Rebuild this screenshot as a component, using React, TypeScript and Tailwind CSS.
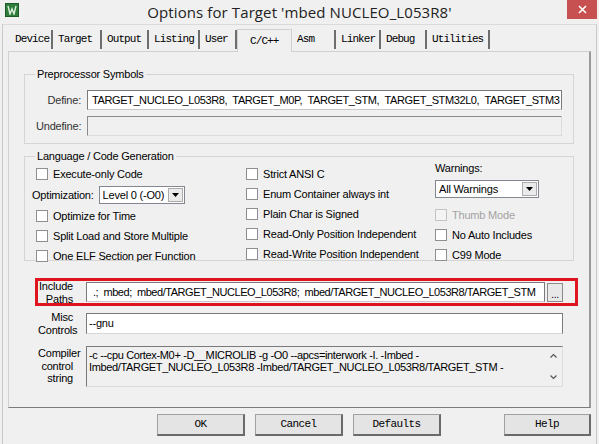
import React from 'react'

const tabs: [string, string][] = [
  ['Device', 'w-[43px]'],
  ['Target', 'w-[49px]'],
  ['Output', 'w-[47px]'],
  ['Listing', 'w-[51px]'],
  ['User', 'w-[37px]'],
  ['C/C++', 'w-[55px]'],
  ['Asm', 'w-[44px]'],
  ['Linker', 'w-[45px]'],
  ['Debug', 'w-[46px]'],
  ['Utilities', 'w-[63px]'],
]

const Check = ({ label, disabled }: { label: string; disabled?: boolean }) => (
  <div className="flex items-center h-[20px] gap-[5px]">
    <span
      className={
        'w-[12px] h-[12px] border ' +
        (disabled ? 'border-[#c4c4c4] bg-[#f4f4f4]' : 'border-[#8e8f8f] bg-white')
      }
    />
    <span className={disabled ? 'text-[#a3a3a3]' : 'text-black'}>{label}</span>
  </div>
)

const Select = ({ value, w }: { value: string; w: string }) => (
  <div className={'flex items-center h-[18px] border border-[#828790] bg-white pl-[3px] pr-[1px] ' + w}>
    <span className="flex-1 whitespace-nowrap overflow-hidden">{value}</span>
    <span className="w-[15px] h-[14px] border border-[#acacac] bg-[#eaeaea] flex items-center justify-center">
      <svg width="7" height="4" viewBox="0 0 7 4">
        <path d="M0 0h7L3.5 4z" fill="#000" />
      </svg>
    </span>
  </div>
)

const Group = ({ title, className, children }: { title: string; className: string; children: React.ReactNode }) => (
  <div className={'relative border border-[#d5d5d5] ' + className}>
    <span className="absolute -top-[8px] left-[10px] px-[2px] bg-[#f0f0f0] leading-[14px]">{title}</span>
    {children}
  </div>
)

const FieldLabel = ({ lines }: { lines: string[] }) => (
  <div className="w-[36px] text-right leading-[13px] pr-[1px] pt-[2px] whitespace-nowrap">
    {lines.map((l) => (
      <div key={l}>{l}</div>
    ))}
  </div>
)

const mono = { fontFamily: '"Liberation Mono", "DejaVu Sans Mono", monospace' }

export default function App() {
  return (
    <div
      className="w-[599px] h-[444px] bg-[#f0f0f0] overflow-hidden text-[11px] tracking-[-0.2px] text-black"
      style={{ fontFamily: '"Liberation Sans", Arial, sans-serif' }}
    >
      {/* title bar */}
      <div className="relative h-[24px] flex items-center justify-center">
        <div className="absolute left-[5px] top-[3px] w-[14px] h-[14px] bg-[#2e7d3a] border border-[#1c5a27] flex items-center justify-center">
          <svg width="10" height="10" viewBox="0 0 10 10">
            <path d="M1 1l2 8 2-5 2 5 2-8" stroke="#dff2df" strokeWidth="1.4" fill="none" />
          </svg>
        </div>
        <span className="text-[15px] text-[#222] tracking-[0.1px]" style={{ fontFamily: '"Open Sans", "Noto Sans", sans-serif' }}>
          Options for Target 'mbed NUCLEO_L053R8'
        </span>
        <div className="absolute right-[2px] top-0 w-[30px] h-[19px] bg-[#c75050] flex items-center justify-center">
          <svg width="9" height="9" viewBox="0 0 9 9">
            <path d="M1 1l7 7M8 1l-7 7" stroke="#fff" strokeWidth="1.6" />
          </svg>
        </div>
      </div>

      <div className="mx-[2px] h-[420px] border-x border-[#c9c9c9] border-t border-t-[#dadada] px-[5px]">
        {/* tabs */}
        <div className="flex items-end h-[26px] pl-[2px] text-[11px] tracking-[-0.9px]" style={mono}>
          {tabs.map(([t, w]) =>
            t === 'C/C++' ? (
              <div
                key={t}
                className={'relative -mb-px h-[23px] pl-[12px] pt-[3px] border border-b-0 border-[#d0d0d0] bg-[#f0f0f0] z-10 ' + w}
              >
                {t}
              </div>
            ) : (
              <div key={t} className={'h-[19px] flex items-center pl-[5px] mb-[2px] border-r-2 border-[#6e6e6e] ' + w}>
                {t}
              </div>
            )
          )}
        </div>

        {/* panel */}
        <div className="h-[357px] border border-[#d0d0d0] border-r-2 border-r-[#9a9a9a] border-b-[#7c7c7c] px-[15px] pt-[22px]">
          <Group title="Preprocessor Symbols" className="h-[70px] pt-[15px] pl-[11px] pr-[11px]">
            <div className="flex items-center gap-[6px]">
              <span className="w-[45px] text-right text-[#333]">Define:</span>
              <div className="flex-1 h-[20px] border border-[#7a7a7a] border-b-[#c8c8c8] bg-white flex items-center pl-[4px] whitespace-nowrap overflow-hidden tracking-[-0.4px]">
                TARGET_NUCLEO_L053R8, &nbsp;TARGET_M0P, &nbsp;TARGET_STM, &nbsp;TARGET_STM32L0, &nbsp;TARGET_STM3
              </div>
            </div>
            <div className="flex items-center gap-[6px] mt-[6px]">
              <span className="w-[45px] text-right text-[#333]">Undefine:</span>
              <div className="flex-1 h-[20px] border border-[#8a8a8a] border-b-[#dcdcdc] border-r-[#dcdcdc] bg-[#f0f0f0]" />
            </div>
          </Group>

          <Group title="Language / Code Generation" className="mt-[12px] h-[105px] pt-[7px] pl-[9px]">
            <div className="flex">
              <div className="w-[212px]">
                <div className="pl-[2px]">
                  <Check label="Execute-only Code" />
                </div>
                <div className="flex items-center h-[22px] gap-[5px] -ml-[2px]">
                  <span>Optimization:</span>
                  <Select value="Level 0 (-O0)" w="w-[86px]" />
                </div>
                <div className="pl-[2px]">
                  <Check label="Optimize for Time" />
                  <Check label="Split Load and Store Multiple" />
                  <Check label="One ELF Section per Function" />
                </div>
              </div>
              <div className="w-[189px]">
                <Check label="Strict ANSI C" />
                <Check label="Enum Container always int" />
                <Check label="Plain Char is Signed" />
                <Check label="Read-Only Position Independent" />
                <Check label="Read-Write Position Independent" />
              </div>
              <div>
                <div className="h-[13px] leading-[13px] -mt-[2px] mb-[5px]">Warnings:</div>
                <Select value="All Warnings" w="w-[104px]" />
                <div className="mt-[7px]">
                  <Check label="Thumb Mode" disabled />
                  <Check label="No Auto Includes" />
                  <Check label="C99 Mode" />
                </div>
              </div>
            </div>
          </Group>

          {/* include paths */}
          <div className="mt-[17px] ml-[11px] -mr-[4px] h-[28px] border-[3px] border-[#e0141e] flex items-center">
            <FieldLabel lines={['Include', 'Paths']} />
            <div className="ml-[12px] flex-1 h-[20px] border border-[#7a7a7a] border-b-[#c8c8c8] bg-white flex items-center pl-[6px] whitespace-nowrap overflow-hidden tracking-[-0.45px]">
              .; &nbsp;mbed; &nbsp;mbed/TARGET_NUCLEO_L053R8; &nbsp;mbed/TARGET_NUCLEO_L053R8/TARGET_STM
            </div>
            <div className="ml-[2px] mr-[12px] w-[16px] h-[19px] border border-[#8c8c8c] bg-[#e8e8e8] flex items-end justify-center text-[10px] leading-[12px]">
              ...
            </div>
          </div>

          <div className="mt-[3px] ml-[14px] mr-[11px] flex items-center">
            <FieldLabel lines={['Misc', 'Controls']} />
            <div className="ml-[12px] flex-1 h-[21px] border border-[#7a7a7a] border-b-[#d8d8d8] bg-white flex items-center pl-[2px]">
              --gnu
            </div>
          </div>

          <div className="mt-[9px] ml-[14px] mr-[11px] flex items-start">
            <div className="w-[36px] text-right leading-[12.5px] pr-[1px] pt-[1px]">
              <div>Compiler</div>
              <div>control</div>
              <div>string</div>
            </div>
            <div className="ml-[12px] flex-1 h-[41px] border border-[#7a7a7a] border-b-[#dcdcdc] border-r-[#dcdcdc] bg-[#f0f0f0] flex">
              <div className="flex-1 pl-[2px] pt-[2px] leading-[12px] whitespace-nowrap overflow-hidden tracking-[-0.35px]">
                <div>-c --cpu Cortex-M0+ -D__MICROLIB -g -O0 --apcs=interwork -I. -Imbed -</div>
                <div>Imbed/TARGET_NUCLEO_L053R8 -Imbed/TARGET_NUCLEO_L053R8/TARGET_STM -</div>
              </div>
              <div className="w-[17px] flex flex-col justify-between items-center py-[6px]">
                <svg width="7" height="5" viewBox="0 0 7 5">
                  <path d="M0.5 4.5l3-3 3 3" stroke="#555" strokeWidth="1.2" fill="none" />
                </svg>
                <svg width="7" height="5" viewBox="0 0 7 5">
                  <path d="M0.5 0.5l3 3 3-3" stroke="#555" strokeWidth="1.2" fill="none" />
                </svg>
              </div>
            </div>
          </div>
        </div>

        {/* buttons */}
        <div className="flex mt-[6px] text-[11px] tracking-[-0.6px]" style={mono}>
          <div className="ml-[149px] flex gap-[10px]">
            {['OK', 'Cancel', 'Defaults'].map((b) => (
              <div
                key={b}
                className="w-[88px] h-[22px] flex items-center justify-center bg-[#e4e4e4] border border-[#a0a0a0] border-r-2 border-b-2 border-r-[#6a6a6a] border-b-[#6a6a6a]"
              >
                {b}
              </div>
            ))}
          </div>
          <div className="ml-[63px] w-[87px] h-[22px] flex items-center justify-center bg-[#e4e4e4] border border-[#a0a0a0] border-r-2 border-b-2 border-r-[#6a6a6a] border-b-[#6a6a6a]">
            Help
          </div>
        </div>
      </div>
    </div>
  )
}
